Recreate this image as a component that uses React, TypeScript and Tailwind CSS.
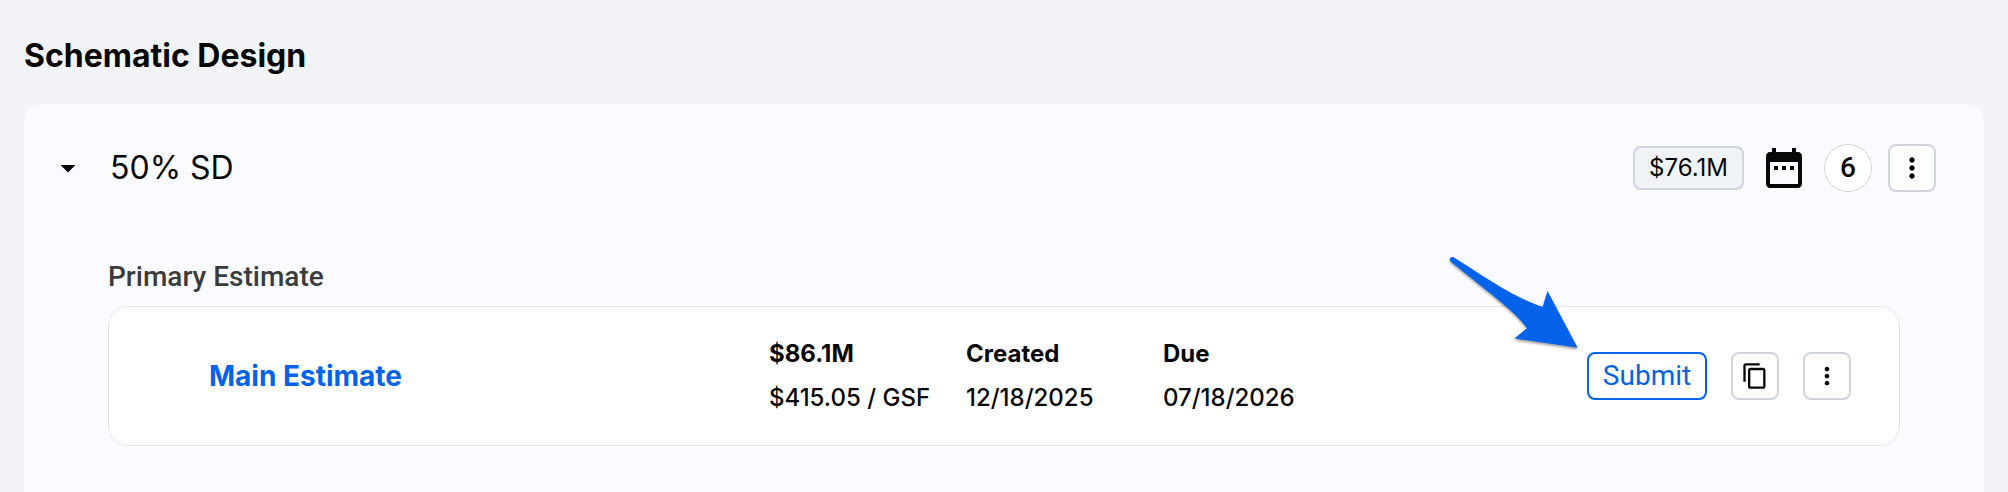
import React from 'react'

interface IconProps {
  className?: string
}

interface Metric {
  label: string
  value: string
}

const metrics: Metric[] = [
  { label: '$86.1M', value: '$415.05 / GSF' },
  { label: 'Created', value: '12/18/2025' },
  { label: 'Due', value: '07/18/2026' },
]

function CaretDownIcon({ className = '' }: IconProps) {
  return (
    <svg viewBox="0 0 24 24" fill="currentColor" className={className} aria-hidden="true">
      <path d="M7 10l5 5 5-5z" />
    </svg>
  )
}

function CalendarIcon({ className = '' }: IconProps) {
  return (
    <svg viewBox="0 0 24 24" fill="currentColor" className={className} aria-hidden="true">
      <path d="M9 11H7v2h2v-2zm4 0h-2v2h2v-2zm4 0h-2v2h2v-2z" />
      <path d="M19 4h-1V2h-2v2H8V2H6v2H5c-1.1 0-2 .9-2 2v14c0 1.1.9 2 2 2h14c1.1 0 2-.9 2-2V6c0-1.1-.9-2-2-2zm0 16H5V9h14v11z" />
    </svg>
  )
}

function MoreIcon({ className = '' }: IconProps) {
  return (
    <svg viewBox="0 0 24 24" fill="currentColor" className={className} aria-hidden="true">
      <path d="M12 8c1.1 0 2-.9 2-2s-.9-2-2-2-2 .9-2 2 .9 2 2 2zm0 2c-1.1 0-2 .9-2 2s.9 2 2 2 2-.9 2-2-.9-2-2-2zm0 6c-1.1 0-2 .9-2 2s.9 2 2 2 2-.9 2-2-.9-2-2-2z" />
    </svg>
  )
}

function CopyIcon({ className = '' }: IconProps) {
  return (
    <svg viewBox="0 0 24 24" fill="currentColor" className={className} aria-hidden="true">
      <path d="M16 1H4c-1.1 0-2 .9-2 2v14h2V3h12V1zm3 4H8c-1.1 0-2 .9-2 2v14c0 1.1.9 2 2 2h11c1.1 0 2-.9 2-2V7c0-1.1-.9-2-2-2zm0 16H8V7h11v14z" />
    </svg>
  )
}

function PointerArrow({ className = '' }: IconProps) {
  return (
    <svg viewBox="0 0 140 104" className={className} aria-hidden="true">
      <path
        fill="#0562eb"
        d="M10.5 9.5C8.500 7 11 4 14 5.500C42 23 76 47 102.700 54.700L107.500 39L137.700 95.700L74.300 86.500L87 76.300C76 60 48 40 10.500 9.500Z"
      />
    </svg>
  )
}

interface IconButtonProps {
  label: string
  children: React.ReactNode
}

function IconButton({ label, children }: IconButtonProps) {
  return (
    <button
      type="button"
      aria-label={label}
      className="flex size-12 items-center justify-center rounded-lg border-2 border-[#d0d4df] bg-white"
    >
      {children}
    </button>
  )
}

function EstimateCard() {
  return (
    <div className="grid grid-cols-[560fr_591fr_491fr] items-center rounded-[20px] border border-[#e4e4e7] bg-white py-[25px] pr-12 pl-[100px]">
      <div>
        <a href="#main-estimate" className="text-[28px] leading-10 font-bold text-[#0562eb]">
          Main Estimate
        </a>
      </div>

      <dl className="grid grid-cols-3 text-2xl">
        {metrics.map((metric) => (
          <div key={metric.label} className="whitespace-nowrap">
            <dt className="leading-11 font-bold">{metric.label}</dt>
            <dd className="leading-11 font-medium">{metric.value}</dd>
          </div>
        ))}
      </dl>

      <div className="flex items-center justify-end gap-6">
        <div className="relative">
          <button
            type="button"
            className="h-12 w-30 rounded-lg border-2 border-[#0562eb] bg-white font-[Roboto,sans-serif] text-[28px] leading-10 text-[#0562eb]"
          >
            Submit
          </button>
          {/* Callout pointing at the submit action */}
          <PointerArrow className="pointer-events-none absolute right-full bottom-full mr-[7px] -mb-1 h-[104px] w-[140px] max-w-none drop-shadow-[0_2px_1px_rgba(0,0,0,0.35)]" />
        </div>
        <IconButton label="Copy estimate">
          <CopyIcon className="size-7" />
        </IconButton>
        <IconButton label="Estimate options">
          <MoreIcon className="size-7" />
        </IconButton>
      </div>
    </div>
  )
}

export default function App() {
  return (
    <main className="flex min-h-screen flex-col bg-[#f2f3f7] px-6 pt-9 font-[Inter,sans-serif] text-[#080808]">
      <h1 className="mb-7 text-[32px] leading-10 font-bold">Schematic Design</h1>

      <section className="flex-1 rounded-t-2xl bg-[#fafbff] pt-10">
        <div className="flex items-center justify-between pr-12 pl-6">
          <div className="flex items-center gap-[22px]">
            <button type="button" aria-label="Collapse 50% SD" className="flex size-10 items-center justify-center">
              <CaretDownIcon className="size-9" />
            </button>
            <h2 className="text-[32px] leading-10">50% SD</h2>
          </div>

          <div className="flex items-center gap-4">
            <span className="flex h-11 items-center rounded-lg border-2 border-[#d0d4df] bg-[#f0f3f6] px-[14px] text-2xl leading-10">
              $76.1M
            </span>
            <CalendarIcon className="size-12" />
            <span className="flex size-12 items-center justify-center rounded-full border border-[#d4d4d4] bg-white font-[Roboto,sans-serif] text-[28px] leading-10 font-medium">
              6
            </span>
            <IconButton label="Milestone options">
              <MoreIcon className="size-8" />
            </IconButton>
          </div>
        </div>

        <div className="mt-[65px] px-[84px]">
          <h3 className="mb-[9px] font-[Roboto,sans-serif] text-[28px] leading-10 font-medium text-[#3c3c3c]">
            Primary Estimate
          </h3>
          <EstimateCard />
        </div>
      </section>
    </main>
  )
}
